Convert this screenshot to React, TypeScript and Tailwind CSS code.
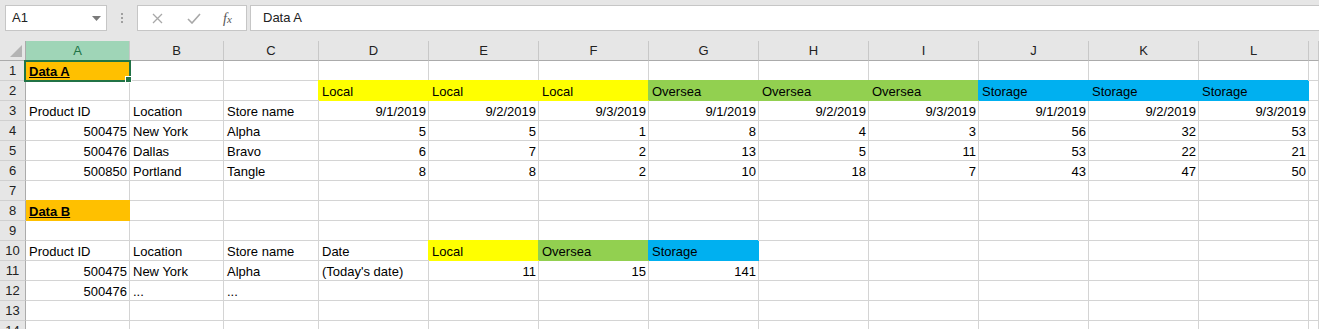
type Fill = 'y' | 'g' | 'b' | 'o'

interface CellSpec {
  t?: string
  r?: boolean
  f?: Fill
  b?: boolean
}

const fills: Record<Fill, string> = {
  y: 'bg-[#ffff00] border-[#ffff00] shadow-[-1px_-1px_0_0_#ffff00]',
  g: 'bg-[#92d050] border-[#92d050] shadow-[-1px_-1px_0_0_#92d050]',
  b: 'bg-[#00b0f0] border-[#00b0f0] shadow-[-1px_-1px_0_0_#00b0f0]',
  o: 'bg-[#ffc000] border-[#ffc000] shadow-[0_-1px_0_0_#ffc000]',
}

// M is only a sliver at the right edge, its letter falls off screen
const cols = ['A', 'B', 'C', 'D', 'E', 'F', 'G', 'H', 'I', 'J', 'K', 'L', '']

const L = (t: string): CellSpec => ({ t })
const N = (t: string): CellSpec => ({ t, r: true })
const E: CellSpec = {}

const nums = (...vals: string[]) => vals.map(N)

const rows: CellSpec[][] = [
  [{ t: 'Data A', f: 'o', b: true }],
  [E, E, E,
    { t: 'Local', f: 'y' }, { t: 'Local', f: 'y' }, { t: 'Local', f: 'y' },
    { t: 'Oversea', f: 'g' }, { t: 'Oversea', f: 'g' }, { t: 'Oversea', f: 'g' },
    { t: 'Storage', f: 'b' }, { t: 'Storage', f: 'b' }, { t: 'Storage', f: 'b' }],
  [L('Product ID'), L('Location'), L('Store name'),
    ...nums('9/1/2019', '9/2/2019', '9/3/2019', '9/1/2019', '9/2/2019', '9/3/2019', '9/1/2019', '9/2/2019', '9/3/2019')],
  [N('500475'), L('New York'), L('Alpha'), ...nums('5', '5', '1', '8', '4', '3', '56', '32', '53')],
  [N('500476'), L('Dallas'), L('Bravo'), ...nums('6', '7', '2', '13', '5', '11', '53', '22', '21')],
  [N('500850'), L('Portland'), L('Tangle'), ...nums('8', '8', '2', '10', '18', '7', '43', '47', '50')],
  [],
  [{ t: 'Data B', f: 'o', b: true }],
  [],
  [L('Product ID'), L('Location'), L('Store name'), L('Date'),
    { t: 'Local', f: 'y' }, { t: 'Oversea', f: 'g' }, { t: 'Storage', f: 'b' }],
  [N('500475'), L('New York'), L('Alpha'), L("(Today's date)"), N('11'), N('15'), N('141')],
  [N('500476'), L('...'), L('...')],
  [],
  [],
]

function Cell({ spec, selected }: { spec: CellSpec; selected?: boolean }) {
  const tone = spec.f ? fills[spec.f] : 'bg-white border-[#d4d4d4]'
  return (
    <div className={`relative h-[20px] border-r border-b ${tone}`}>
      <div
        className={`h-[19px] overflow-hidden whitespace-nowrap leading-[21px] text-[13px] text-black ${
          spec.r ? 'text-right pr-[2px]' : 'pl-[3px]'
        } ${spec.b ? 'font-bold underline' : ''}`}
      >
        {spec.t}
      </div>
      {selected && (
        <>
          <div className="absolute -left-[2px] -top-[1px] z-10 h-[22px] w-[107px] border-2 border-[#217346]" />
          <div className="absolute left-[99px] top-[15px] z-20 h-[7px] w-[7px] border border-white bg-[#217346]" />
        </>
      )}
    </div>
  )
}

function FormulaBar() {
  return (
    <div className="flex h-[41px] items-start bg-[#e6e6e6] pl-[5px] pt-[5px] text-[13px] text-[#222]">
      <div className="flex h-[26px] w-[102px] items-center justify-between border border-[#c6c6c6] bg-white pl-[6px] pr-[5px]">
        <span>A1</span>
        <svg width="9" height="5" viewBox="0 0 9 5">
          <polygon points="0,0 9,0 4.5,5" fill="#7a7a7a" />
        </svg>
      </div>
      <div className="flex h-[26px] w-[30px] flex-col items-center justify-center gap-[2px]">
        <span className="h-[2px] w-[2px] bg-[#a0a0a0]" />
        <span className="h-[2px] w-[2px] bg-[#a0a0a0]" />
        <span className="h-[2px] w-[2px] bg-[#a0a0a0]" />
      </div>
      <div className="flex h-[26px] w-[110px] items-center border border-[#c6c6c6] bg-white pl-[14px]">
        <svg width="11" height="11" viewBox="0 0 11 11" className="mt-[1px]">
          <path d="M1 1 L10 10 M10 1 L1 10" stroke="#a8a8a8" strokeWidth="1.3" />
        </svg>
        <svg width="14" height="11" viewBox="0 0 14 11" className="ml-[24px] mt-[1px]">
          <path d="M1 6 L5 10 L13 1" stroke="#a8a8a8" strokeWidth="1.6" fill="none" />
        </svg>
        <span className="ml-[22px] font-['Liberation_Serif',serif] text-[14px] italic text-[#555]">
          f<span className="text-[11px]">x</span>
        </span>
      </div>
      <div className="ml-[3px] flex h-[26px] flex-1 items-center border-y border-l border-[#c6c6c6] bg-white pl-[12px]">
        Data A
      </div>
    </div>
  )
}

function RowCells({ index, row }: { index: number; row: CellSpec[] }) {
  return (
    <>
      <div className="flex h-[20px] items-center justify-center border-b border-r border-b-[#d0d0d0] border-r-[#ababab] bg-[#e6e6e6] text-[13px] text-[#222]">
        {index}
      </div>
      {cols.map((c, ci) => (
        <Cell key={ci} spec={row[ci] ?? E} selected={index === 1 && ci === 0} />
      ))}
    </>
  )
}

export default function App() {
  return (
    <div className="h-[329px] w-[1319px] overflow-hidden bg-white font-['Liberation_Sans',Arial,sans-serif]">
      <FormulaBar />
      <div className="grid grid-cols-[26px_104px_94px_95px_repeat(9,110px)_1fr]">
        {/* corner */}
        <div className="relative h-[20px] border-b border-r border-[#ababab] bg-[#e6e6e6]">
          <svg width="26" height="19" viewBox="0 0 26 19" className="absolute left-0 top-0">
            <polygon points="22,4 22,16 10,16" fill="#b4b4b4" />
          </svg>
        </div>
        {cols.map((c, i) =>
          i === 0 ? (
            <div
              key={i}
              className="flex h-[20px] items-center justify-center border-b border-r border-b-[#217346] border-r-[#c8c8c8] bg-[#9fd5b7] text-[13px] text-[#217346]"
            >
              {c}
            </div>
          ) : (
            <div
              key={i}
              className="flex h-[20px] items-center justify-center border-b border-r border-b-[#ababab] border-r-[#c8c8c8] bg-[#e6e6e6] text-[13px] text-[#222]"
            >
              {c}
            </div>
          )
        )}
        {rows.map((row, ri) => (
          <RowCells key={ri} index={ri + 1} row={row} />
        ))}
      </div>
    </div>
  )
}
